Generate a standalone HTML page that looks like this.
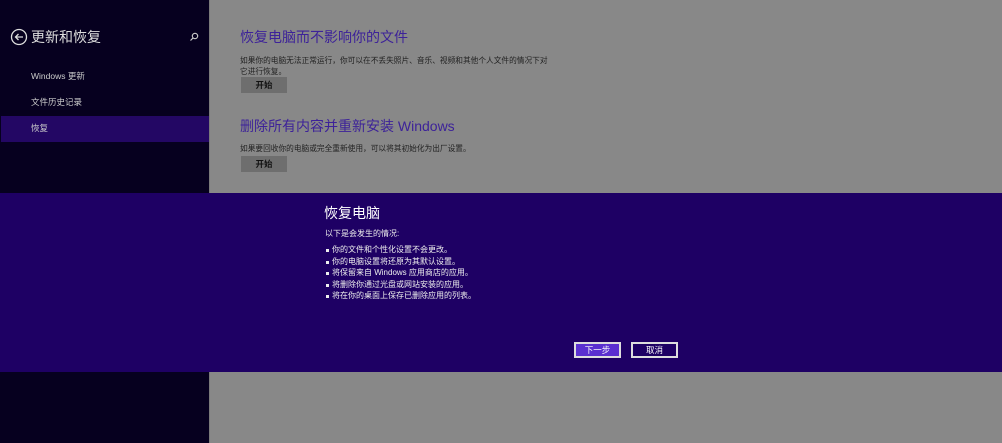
<!DOCTYPE html>
<html><head><meta charset="utf-8"><style>
*{margin:0;padding:0;box-sizing:border-box}
body{width:1002px;height:443px;overflow:hidden;position:relative;background:#888;font-family:"Liberation Sans","Noto Sans CJK SC",sans-serif}
.left{position:absolute;left:0;top:0;width:209px;height:443px;background:#06001f}
.right{position:absolute;left:209px;top:0;right:0;height:443px;background:#888888;border-left:1px solid #7a7a7a}
.t{position:absolute;white-space:nowrap}
.btn{position:absolute;width:46px;height:16px;background:#6e6e6e;color:#111;font-size:8.5px;text-align:center;line-height:16px;font-weight:bold}
.dlg{position:absolute;left:0;top:193px;width:1002px;height:179px;background:#1e0064}
.db{position:absolute;height:16px;width:47px;border:2px solid #ddd;color:#fff;font-size:8.5px;text-align:center;line-height:12px}
.li{position:relative;padding-left:7px}
.li:before{content:"";position:absolute;left:1px;top:5px;width:3px;height:3px;background:#eee}
</style></head><body>
<div class="left"></div>
<div class="right"></div>
<svg class="t" style="left:10px;top:28px" width="18" height="18" viewBox="0 0 18 18"><circle cx="9" cy="9" r="7.5" fill="none" stroke="#ddd" stroke-width="1.3"/><path d="M13 9H5.5M8.5 6L5.5 9l3 3" fill="none" stroke="#ddd" stroke-width="1.3"/></svg>
<div class="t" style="left:31px;top:27px;font-size:14px;color:#ddd">更新和恢复</div>
<svg class="t" style="left:189px;top:32px" width="10" height="10" viewBox="0 0 10 10"><circle cx="6" cy="4" r="2.7" fill="none" stroke="#ccc" stroke-width="1.1"/><path d="M4 6L1.5 8.5" stroke="#ccc" stroke-width="1.2"/></svg>
<div class="t" style="left:31px;top:70px;font-size:8.5px;color:#ccc">Windows 更新</div>
<div class="t" style="left:31px;top:96px;font-size:8.5px;color:#ccc">文件历史记录</div>
<div class="t" style="left:1px;top:116px;width:208px;height:26px;background:#230764"></div>
<div class="t" style="left:31px;top:122px;font-size:8.5px;color:#ccc">恢复</div>
<div class="t" style="left:240px;top:27px;font-size:14px;color:#3d2299">恢复电脑而不影响你的文件</div>
<div class="t" style="left:240px;top:55px;font-size:7.7px;color:#222;line-height:11px">如果你的电脑无法正常运行，你可以在不丢失照片、音乐、视频和其他个人文件的情况下对<br>它进行恢复。</div>
<div class="btn" style="left:241px;top:77px">开始</div>
<div class="t" style="left:240px;top:116px;font-size:14px;color:#3d2299">删除所有内容并重新安装 Windows</div>
<div class="t" style="left:240px;top:143px;font-size:7.7px;color:#222">如果要回收你的电脑或完全重新使用，可以将其初始化为出厂设置。</div>
<div class="btn" style="left:241px;top:156px">开始</div>
<div class="dlg"></div>
<div class="t" style="left:324px;top:203px;font-size:14px;color:#fff">恢复电脑</div>
<div class="t" style="left:325px;top:228px;font-size:8px;color:#eee">以下是会发生的情况:</div>
<div class="t" style="left:325px;top:244px;font-size:8px;color:#eee;line-height:11.5px">
<div class="li">你的文件和个性化设置不会更改。</div>
<div class="li">你的电脑设置将还原为其默认设置。</div>
<div class="li">将保留来自 Windows 应用商店的应用。</div>
<div class="li">将删除你通过光盘或网站安装的应用。</div>
<div class="li">将在你的桌面上保存已删除应用的列表。</div>
</div>
<div class="db" style="left:574px;top:342px;background:#5a2fd0">下一步</div>
<div class="db" style="left:631px;top:342px;background:#1e0064">取消</div>
</body></html>
